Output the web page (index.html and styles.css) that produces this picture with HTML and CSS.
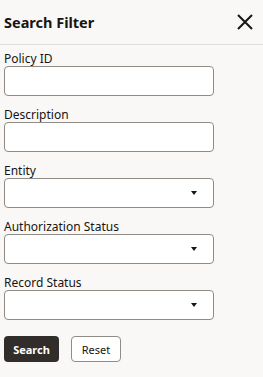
FILE: index.html
```html
<!DOCTYPE html>
<html lang="en">
<head>
    <meta charset="UTF-8">
    <meta name="viewport" content="width=device-width, initial-scale=1.0">
    <title>Search Filter</title>
    <link rel="stylesheet" href="styles.css">
</head>
<body>
    <header class="panel-header">
        <h1>Search Filter</h1>
        <button class="close-btn" aria-label="Close">
            <svg width="16" height="16" viewBox="0 0 16 16">
                <path d="M1 1 L15 15 M15 1 L1 15" stroke="#161513" stroke-width="2" fill="none"/>
            </svg>
        </button>
    </header>
    <form class="filter-form">
        <div class="field">
            <label>Policy ID</label>
            <div class="input"></div>
        </div>
        <div class="field">
            <label>Description</label>
            <div class="input"></div>
        </div>
        <div class="field">
            <label>Entity</label>
            <div class="input select"><span class="caret"></span></div>
        </div>
        <div class="field">
            <label>Authorization Status</label>
            <div class="input select"><span class="caret"></span></div>
        </div>
        <div class="field">
            <label>Record Status</label>
            <div class="input select"><span class="caret"></span></div>
        </div>
        <div class="actions">
            <button type="button" class="btn btn-primary">Search</button>
            <button type="button" class="btn btn-outline">Reset</button>
        </div>
    </form>
</body>
</html>
```

FILE: styles.css
```css
body {
    font-family: 'Noto Sans', sans-serif;
    margin: 0;
    padding: 0;
    background-color: #f9f8f6;
    color: #161513;
}
.panel-header {
    height: 44px;
    display: flex;
    align-items: center;
    justify-content: space-between;
    padding: 0 10px 0 4px;
    border-bottom: 1px solid #e0dedb;
}
.panel-header h1 {
    margin: 0;
    font-size: 14.5px;
    font-weight: bold;
    line-height: 20px;
}
.close-btn {
    border: none;
    background: none;
    padding: 0;
    width: 16px;
    height: 16px;
    display: flex;
}
.filter-form {
    padding: 7px 4px 0;
    display: flex;
    flex-direction: column;
    gap: 12px;
}
.field {
    display: flex;
    flex-direction: column;
}
.field label {
    font-size: 12px;
    line-height: 14px;
    color: #161513;
}
.input {
    width: 210px;
    height: 30px;
    box-sizing: border-box;
    background: #fff;
    border: 1px solid #8f8b87;
    border-radius: 4px;
    display: flex;
    align-items: center;
    justify-content: flex-end;
    padding-right: 16px;
}
.caret {
    width: 0;
    height: 0;
    border-left: 3px solid transparent;
    border-right: 3px solid transparent;
    border-top: 4px solid #161513;
}
.actions {
    display: flex;
    gap: 12px;
    margin-top: 4px;
}
.btn {
    height: 26px;
    border-radius: 4px;
    font-family: 'Noto Sans', sans-serif;
    font-size: 11px;
    padding: 0;
    cursor: pointer;
}
.btn-primary {
    width: 55px;
    background: #312d2a;
    color: #fff;
    border: none;
    font-weight: bold;
}
.btn-outline {
    width: 50px;
    background: #fff;
    color: #161513;
    border: 1px solid #8f8b87;
}
```
